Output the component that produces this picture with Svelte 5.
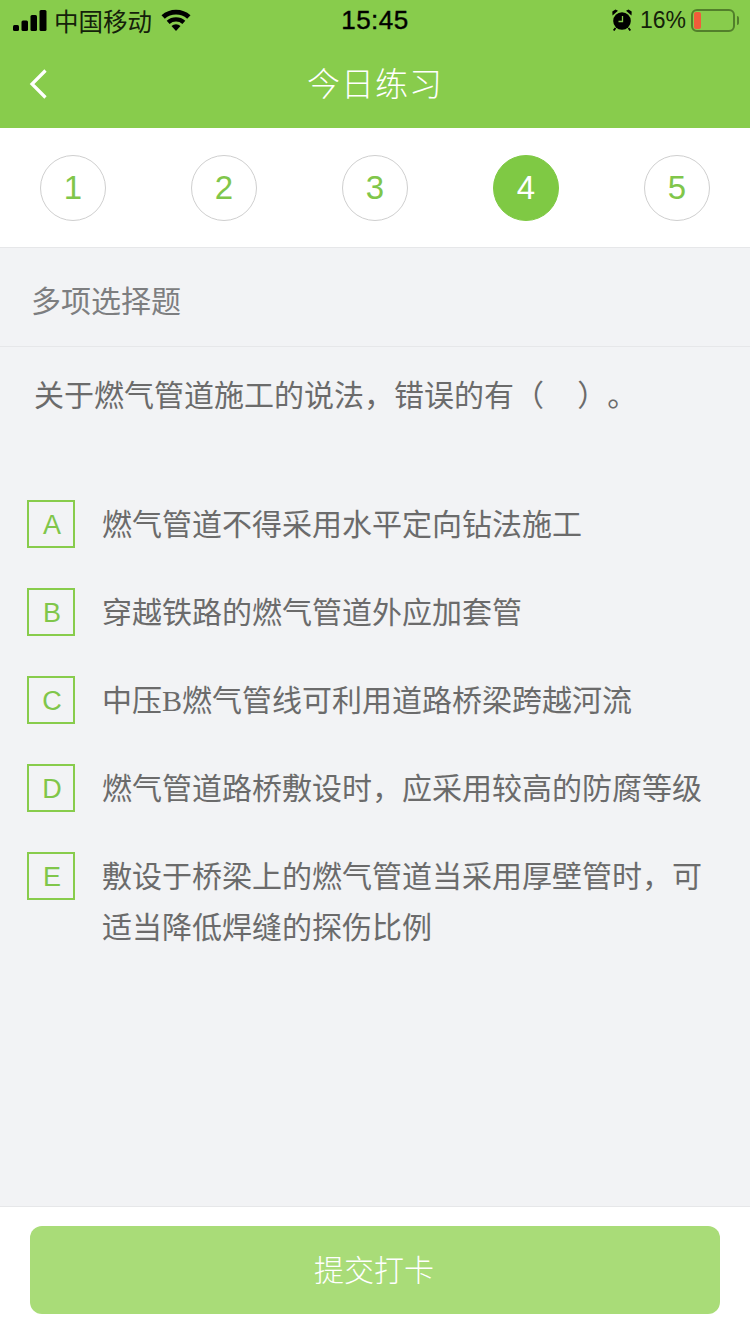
<script>
	const steps = [1, 2, 3, 4, 5];
	const current = 4;
	const options = [
		{ key: 'A', parts: ['燃气管道不得采用水平定向钻法施工'] },
		{ key: 'B', parts: ['穿越铁路的燃气管道外应加套管'] },
		{ key: 'C', parts: ['中压', 'B', '燃气管线可利用道路桥梁跨越河流'] },
		{ key: 'D', parts: ['燃气管道路桥敷设时，应采用较高的防腐等级'] },
		{ key: 'E', parts: ['敷设于桥梁上的燃气管道当采用厚壁管时，可适当降低焊缝的探伤比例'] }
	];
</script>

<div class="page">
	<header class="top">
		<div class="status">
			<div class="status-left">
				<svg class="signal" width="34" height="21" viewBox="0 0 34 21">
					<rect x="0" y="15" width="6" height="6" rx="1.5" />
					<rect x="8.500" y="10.500" width="6.500" height="10.500" rx="1.500" />
					<rect x="17.500" y="5" width="6.500" height="16" rx="1.500" />
					<rect x="26.500" y="0" width="7" height="21" rx="1.500" />
				</svg>
				<span class="carrier">中国移动</span>
				<svg class="wifi" width="30" height="22" viewBox="0 0 30 22">
					<path d="M15 22l-4.500-5a6.800 6.800 0 0 1 9 0z" />
					<path d="M8.600 15a9.800 9.800 0 0 1 12.800 0l2.900-3.200a14.200 14.200 0 0 0-18.600 0z" />
					<path d="M3.800 9.800a17 17 0 0 1 22.400 0l3.300-3.600A21.800 21.800 0 0 0 .5 6.200z" />
				</svg>
			</div>
			<div class="time">15:45</div>
			<div class="status-right">
				<svg class="alarm" width="20" height="22" viewBox="0 0 20 22">
					<circle cx="10" cy="12" r="8.800" />
					<path d="M.5 6.500L6 1.800 3.500.5.300 2.500zM19.500 6.500L14 1.800 16.500.5l3.200 2z" />
					<path d="M3.500 19l-1.800 2.500M16.500 19l1.800 2.500" stroke="#000" stroke-width="1.800" />
					<path d="M10.500 7v5.500H6.500" fill="none" stroke="#88cc4c" stroke-width="1.300" />
				</svg>
				<span class="percent">16%</span>
				<div class="battery"><i></i></div>
				<div class="battery-tip"></div>
			</div>
		</div>
		<div class="nav">
			<svg class="back" width="20" height="32" viewBox="0 0 20 32">
				<path d="M17.500 2.500L4 16l13.500 13.500" fill="none" stroke="#fff" stroke-width="3.200" />
			</svg>
			<h1>今日练习</h1>
		</div>
	</header>

	<nav class="steps">
		{#each steps as step}
			<div class="step" class:active={step === current}>{step}</div>
		{/each}
	</nav>

	<main class="body">
		<div class="kind">多项选择题</div>
		<p class="question">关于燃气管道施工的说法，错误的有（&nbsp;&nbsp;&nbsp;&nbsp;）。</p>
		<ul class="options">
			{#each options as option}
				<li>
					<span class="letter">{option.key}</span>
					<span class="text">
						{#each option.parts as part}
							{#if part === 'B'}<span class="serif">B</span>{:else}{part}{/if}
						{/each}
					</span>
				</li>
			{/each}
		</ul>
	</main>

	<footer class="bottom">
		<button>提交打卡</button>
	</footer>
</div>

<style>
	:global(body) {
		margin: 0;
		background: #f2f3f5;
	}

	.page {
		width: 750px;
		height: 1334px;
		display: flex;
		flex-direction: column;
		font-family: "Liberation Sans", "Noto Sans CJK SC", sans-serif;
	}

	.top {
		background: #88cc4c;
		height: 128px;
		flex: none;
	}

	.status {
		height: 40px;
		display: flex;
		align-items: center;
		justify-content: space-between;
		padding: 0 11px 0 13px;
		color: #000;
		position: relative;
	}

	.status-left,
	.status-right {
		display: flex;
		align-items: center;
	}

	.carrier {
		font-size: 24.500px;
		margin-left: 7px;
		color: #14210a;
		width: 107px;
	}

	.time {
		position: absolute;
		left: 0;
		right: 0;
		text-align: center;
		font-size: 26px;
		font-weight: 500;
		letter-spacing: 0.5px;
		-webkit-text-stroke: 0.4px #000;
	}

	.percent {
		font-size: 23px;
		margin-left: 8px;
		color: #14210a;
	}

	.battery {
		width: 44px;
		height: 23px;
		box-sizing: border-box;
		margin-left: 5px;
		border: 2px solid #527f2b;
		border-radius: 6px;
		padding: 1px;
	}

	.battery i {
		display: block;
		width: 7px;
		height: 100%;
		background: #f25c3a;
		border-radius: 2px;
	}

	.battery-tip {
		width: 2px;
		height: 9px;
		margin-left: 2px;
		background: #527f2b;
		border-radius: 0 2px 2px 0;
	}

	.nav {
		height: 88px;
		display: flex;
		align-items: center;
		justify-content: center;
		position: relative;
	}

	.back {
		position: absolute;
		left: 28px;
		top: 28px;
	}

	h1 {
		margin: 0 0 4px;
		font-size: 33px;
		font-weight: 300;
		color: #fff;
		letter-spacing: 1px;
	}

	.steps {
		flex: none;
		height: 119px;
		background: #fff;
		border-bottom: 1px solid #e6e7e9;
		display: flex;
		justify-content: space-between;
		align-items: center;
		padding: 0 40px;
	}

	.step {
		width: 64px;
		height: 64px;
		border: 1px solid #cfcfcf;
		border-radius: 50%;
		display: flex;
		align-items: center;
		justify-content: center;
		font-size: 33px;
		color: #80c64a;
	}

	.step.active {
		background: #7fc944;
		border-color: #7fc944;
		color: #fff;
	}

	.body {
		flex: 1;
		min-height: 0;
	}

	.kind {
		height: 99px;
		box-sizing: border-box;
		padding: 4px 31px 0;
		display: flex;
		align-items: center;
		font-size: 30px;
		color: #7d7e80;
		border-bottom: 1px solid #e6e7e9;
	}

	.question {
		margin: 0;
		padding: 29px 34px 0;
		font-size: 30px;
		line-height: 40px;
		color: #6b6b6b;
		text-spacing-trim: space-all;
	}

	.options {
		list-style: none;
		margin: 84px 0 0;
		padding: 0 27px;
	}

	.options li {
		display: flex;
		align-items: flex-start;
		margin-bottom: 38px;
	}

	.letter {
		flex: none;
		width: 48px;
		height: 48px;
		padding: 2px 0 0 2px;
		box-sizing: border-box;
		border: 2px solid #88cc4c;
		display: flex;
		align-items: center;
		justify-content: center;
		font-size: 27px;
		color: #80c64a;
		margin-right: 27px;
	}

	.text {
		font-size: 30px;
		line-height: 51px;
		color: #6b6b6b;
		margin-top: -1px;
		width: 600px;
	}

	.serif {
		font-family: "Liberation Serif", serif;
	}

	.bottom {
		flex: none;
		height: 128px;
		box-sizing: border-box;
		background: #fff;
		border-top: 1px solid #e6e7e9;
		padding: 19px 30px 0;
	}

	button {
		width: 100%;
		height: 88px;
		padding: 0 2px 4px 0;
		border: 0;
		border-radius: 12px;
		background: #a9dc78;
		color: #fff;
		font: inherit;
		font-size: 30px;
		font-weight: 300;
	}
</style>
